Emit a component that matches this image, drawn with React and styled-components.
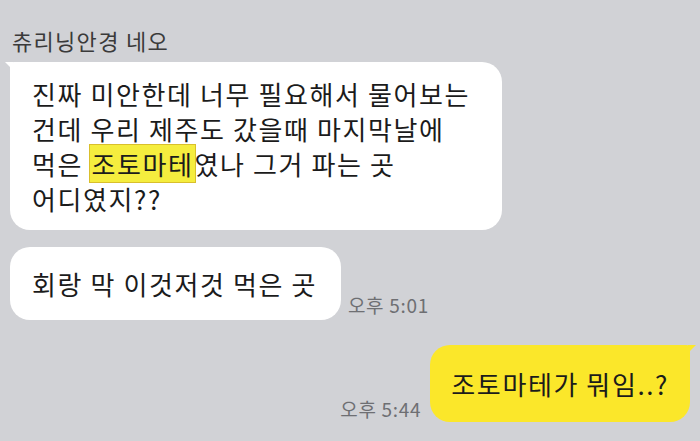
import React from "react";
import styled, { createGlobalStyle, css } from "styled-components";

const GlobalStyle = createGlobalStyle`
  html, body {
    margin: 0;
    padding: 0;
    background: #d1d2d6;
  }
  body {
    font-family: "Noto Sans CJK KR", "Noto Sans", sans-serif;
    color: #222;
  }
`;

const ChatRoom = styled.div`
  width: 700px;
  height: 441px;
  box-sizing: border-box;
  padding: 25px 10px 0 10px;
  display: flex;
  flex-direction: column;
  overflow: hidden;
`;

const SenderName = styled.div`
  font-size: 22px;
  line-height: 30px;
  letter-spacing: 1.3px;
  color: #3a3a3a;
  margin-left: 2px;
  margin-bottom: 7px;
`;

const Row = styled.div`
  display: flex;
  align-items: flex-end;
  gap: ${({ mine }) => (mine ? 9 : 7)}px;
  justify-content: ${({ mine }) => (mine ? "flex-end" : "flex-start")};
  margin-top: ${({ gap }) => gap || 0}px;
`;

const Bubble = styled.div`
  position: relative;
  box-sizing: border-box;
  font-size: 26px;
  line-height: 35px;
  letter-spacing: 1.6px;
  color: #1b1b1b;
  border-radius: 20px;
  padding: ${({ pad }) => pad || "17px 22px"};
  background: ${({ mine }) => (mine ? "#fbe72a" : "#ffffff")};

  ${({ tail, mine }) =>
    tail &&
    (mine
      ? css`
          border-top-right-radius: 4px;
          &::before {
            content: "";
            position: absolute;
            top: 0;
            right: -6px;
            border-top: 8px solid #fbe72a;
            border-right: 8px solid transparent;
          }
        `
      : css`
          border-top-left-radius: 4px;
          &::before {
            content: "";
            position: absolute;
            top: 0;
            left: -5px;
            border-top: 8px solid #ffffff;
            border-left: 8px solid transparent;
          }
        `)}
`;

const Mark = styled.span`
  background: #f5ed3e;
  outline: 1px solid #d9bf2c;
  padding: 0 1px;
`;

const Time = styled.div`
  font-size: 19px;
  line-height: 22px;
  letter-spacing: 0.7px;
  color: #6e6f73;
  padding-bottom: ${({ low }) => (low ? 2 : 4)}px;
  white-space: nowrap;
`;

export default function App() {
  return (
    <>
      <GlobalStyle />
      <ChatRoom>
        <SenderName>츄리닝안경 네오</SenderName>
        <Row>
          <Bubble tail pad="14px 32px 14px 22px">
            진짜 미안한데 너무 필요해서 물어보는
            <br />
            건데 우리 제주도 갔을때 마지막날에
            <br />
            먹은 <Mark>조토마테</Mark>였나 그거 파는 곳
            <br />
            어디였지??
          </Bubble>
        </Row>
        <Row gap={17}>
          <Bubble pad="19px 24px 19px 22px">회랑 막 이것저것 먹은 곳</Bubble>
          <Time>오후 5:01</Time>
        </Row>
        <Row mine gap={25}>
          <Time low>오후 5:44</Time>
          <Bubble mine tail pad="21px 21px">
            조토마테가 뭐임..?
          </Bubble>
        </Row>
      </ChatRoom>
    </>
  );
}
